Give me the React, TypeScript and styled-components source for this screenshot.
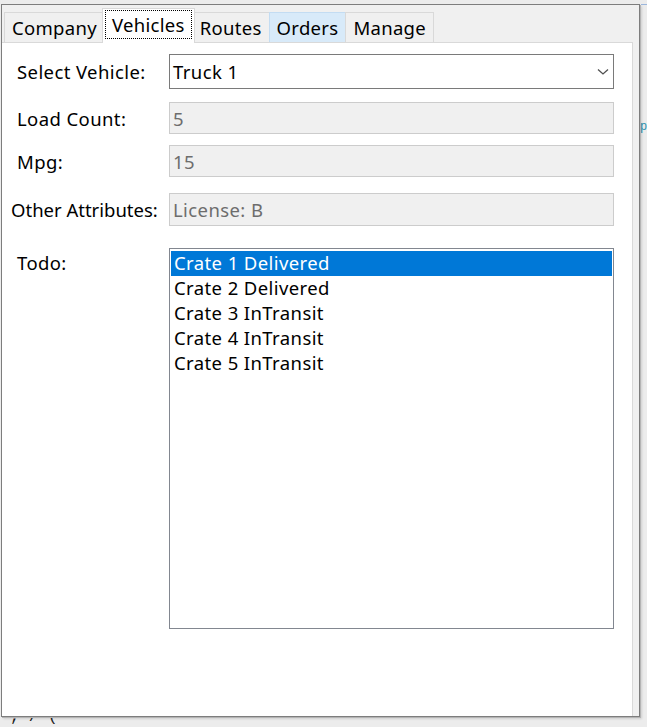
import React from "react";
import styled, { createGlobalStyle, css } from "styled-components";

const GlobalStyle = createGlobalStyle`
  html, body { margin: 0; padding: 0; }
  body {
    background: #ececec;
    font-family: "Noto Sans", "Open Sans", Arial, sans-serif;
    -webkit-font-smoothing: antialiased;
  }
`;

const Desktop = styled.div`
  position: relative;
  width: 647px;
  height: 727px;
  overflow: hidden;
  background: #ececec;
`;

const BgCode = styled.div<{ $left: number; $top: number; $color: string; $size: number }>`
  position: absolute;
  left: ${(p) => p.$left}px;
  top: ${(p) => p.$top}px;
  font-family: "Liberation Mono", monospace;
  font-size: ${(p) => p.$size}px;
  line-height: 18px;
  color: ${(p) => p.$color};
  white-space: pre;
`;

const BgRule = styled.div`
  position: absolute;
  left: 641px;
  top: 4px;
  width: 6px;
  height: 1px;
  background: #9bb6dc;
`;

const Window = styled.div`
  position: absolute;
  left: 1px;
  top: 4px;
  width: 637px;
  height: 711px;
  border: 1px solid #7d7d7d;
  background: #f0f0f0;
  box-shadow: 1px 1px 0 #b4b4b4, 2px 2px 2px rgba(0, 0, 0, 0.12);
  display: flex;
  flex-direction: column;
  font-family: "Noto Sans", "Open Sans", Arial, sans-serif;
  font-size: 18.5px;
  letter-spacing: 0.4px;
`;

const TabStrip = styled.div`
  display: flex;
  align-items: flex-end;
  height: 37px;
  padding-left: 3px;
  position: relative;
  z-index: 1;
  letter-spacing: 0.3px;
`;

const Tab = styled.div<{ $selected?: boolean; $hover?: boolean }>`
  position: relative;
  height: 30px;
  padding: 0 7px;
  display: flex;
  align-items: center;
  box-sizing: border-box;
  border: 1px solid #d9d9d9;
  border-bottom: none;
  margin-left: -1px;
  background: #f0f0f0;
  color: #000;
  white-space: nowrap;
  ${(p) =>
    p.$hover &&
    css`
      background: #d8eaf9;
      border-color: #c3dcf2;
    `}
  ${(p) =>
    p.$selected &&
    css`
      height: 35px;
      margin: 0 -2px 0 -3px;
      padding: 0 2px 3px;
      background: #ffffff;
      z-index: 2;
      top: 1px;
    `}
`;

const FocusRect = styled.span`
  display: flex;
  align-items: center;
  height: 29px;
  padding: 0 6px;
  box-sizing: border-box;
  border: 1px dotted #000;
`;

const TabPage = styled.div`
  flex: 1;
  margin-right: 6px;
  background: #ffffff;
  border: 1px solid #d9d9d9;
  border-left: none;
  border-bottom: none;
  display: flex;
  flex-direction: column;
  padding: 11px 0 0 9px;
`;

const Row = styled.div<{ $mt?: number }>`
  display: flex;
  align-items: center;
  margin-top: ${(p) => p.$mt ?? 0}px;
`;

const Label = styled.div<{ $flush?: boolean; $top?: boolean }>`
  width: ${(p) => (p.$flush ? 158 : 152)}px;
  padding-left: ${(p) => (p.$flush ? 0 : 6)}px;
  letter-spacing: ${(p) => (p.$flush ? "0" : "0.4px")};
  color: #000;
  white-space: nowrap;
  align-self: ${(p) => (p.$top ? "flex-start" : "center")};
  padding-top: ${(p) => (p.$top ? 2 : 0)}px;
`;

const Combo = styled.div`
  width: 445px;
  height: 35px;
  box-sizing: border-box;
  border: 1px solid #7a7a7a;
  background: #fff;
  display: flex;
  align-items: center;
  justify-content: space-between;
  padding: 0 4px 0 3px;
  color: #000;
`;

const TextBox = styled.div<{ $h: number }>`
  width: 445px;
  height: ${(p) => p.$h}px;
  box-sizing: border-box;
  border: 1px solid #cccccc;
  background: #f0f0f0;
  color: #6d6d6d;
  display: flex;
  align-items: center;
  padding-left: 3px;
`;

const ListBox = styled.div`
  width: 445px;
  height: 381px;
  box-sizing: border-box;
  border: 1px solid #828790;
  background: #fff;
  padding: 2px 1px;
  display: flex;
  flex-direction: column;
`;

const ListItem = styled.div<{ $selected?: boolean }>`
  height: 25px;
  line-height: 24px;
  padding-left: 3px;
  color: ${(p) => (p.$selected ? "#fff" : "#000")};
  background: ${(p) => (p.$selected ? "#0078d7" : "transparent")};
  white-space: nowrap;
`;

const Chevron = () => (
  <svg width="12" height="8" viewBox="0 0 12 8">
    <polyline points="1,1.5 6,6 11,1.5" fill="none" stroke="#505050" strokeWidth="1.3" />
  </svg>
);

const tabs = ["Company", "Vehicles", "Routes", "Orders", "Manage"];
const items = [
  "Crate 1 Delivered",
  "Crate 2 Delivered",
  "Crate 3 InTransit",
  "Crate 4 InTransit",
  "Crate 5 InTransit",
];

export default function App() {
  return (
    <Desktop>
      <GlobalStyle />
      <BgRule />
      <BgCode $left={640} $top={118} $color="#2b91af" $size={12}>p</BgCode>
      <BgCode $left={0} $top={708} $color="#1a1a1a" $size={16}>{"•; / ("}</BgCode>
      <Window>
        <TabStrip>
          {tabs.map((t) =>
            t === "Vehicles" ? (
              <Tab key={t} $selected>
                <FocusRect>{t}</FocusRect>
              </Tab>
            ) : (
              <Tab key={t} $hover={t === "Orders"}>
                {t}
              </Tab>
            )
          )}
        </TabStrip>
        <TabPage>
          <Row>
            <Label>Select Vehicle:</Label>
            <Combo>
              <span>Truck 1</span>
              <Chevron />
            </Combo>
          </Row>
          <Row $mt={13}>
            <Label>Load Count:</Label>
            <TextBox $h={32}>5</TextBox>
          </Row>
          <Row $mt={11}>
            <Label>Mpg:</Label>
            <TextBox $h={32}>15</TextBox>
          </Row>
          <Row $mt={16}>
            <Label $flush>Other Attributes:</Label>
            <TextBox $h={33}>License: B</TextBox>
          </Row>
          <Row $mt={22}>
            <Label $top>Todo:</Label>
            <ListBox>
              {items.map((it, i) => (
                <ListItem key={it} $selected={i === 0}>
                  {it}
                </ListItem>
              ))}
            </ListBox>
          </Row>
        </TabPage>
      </Window>
    </Desktop>
  );
}
